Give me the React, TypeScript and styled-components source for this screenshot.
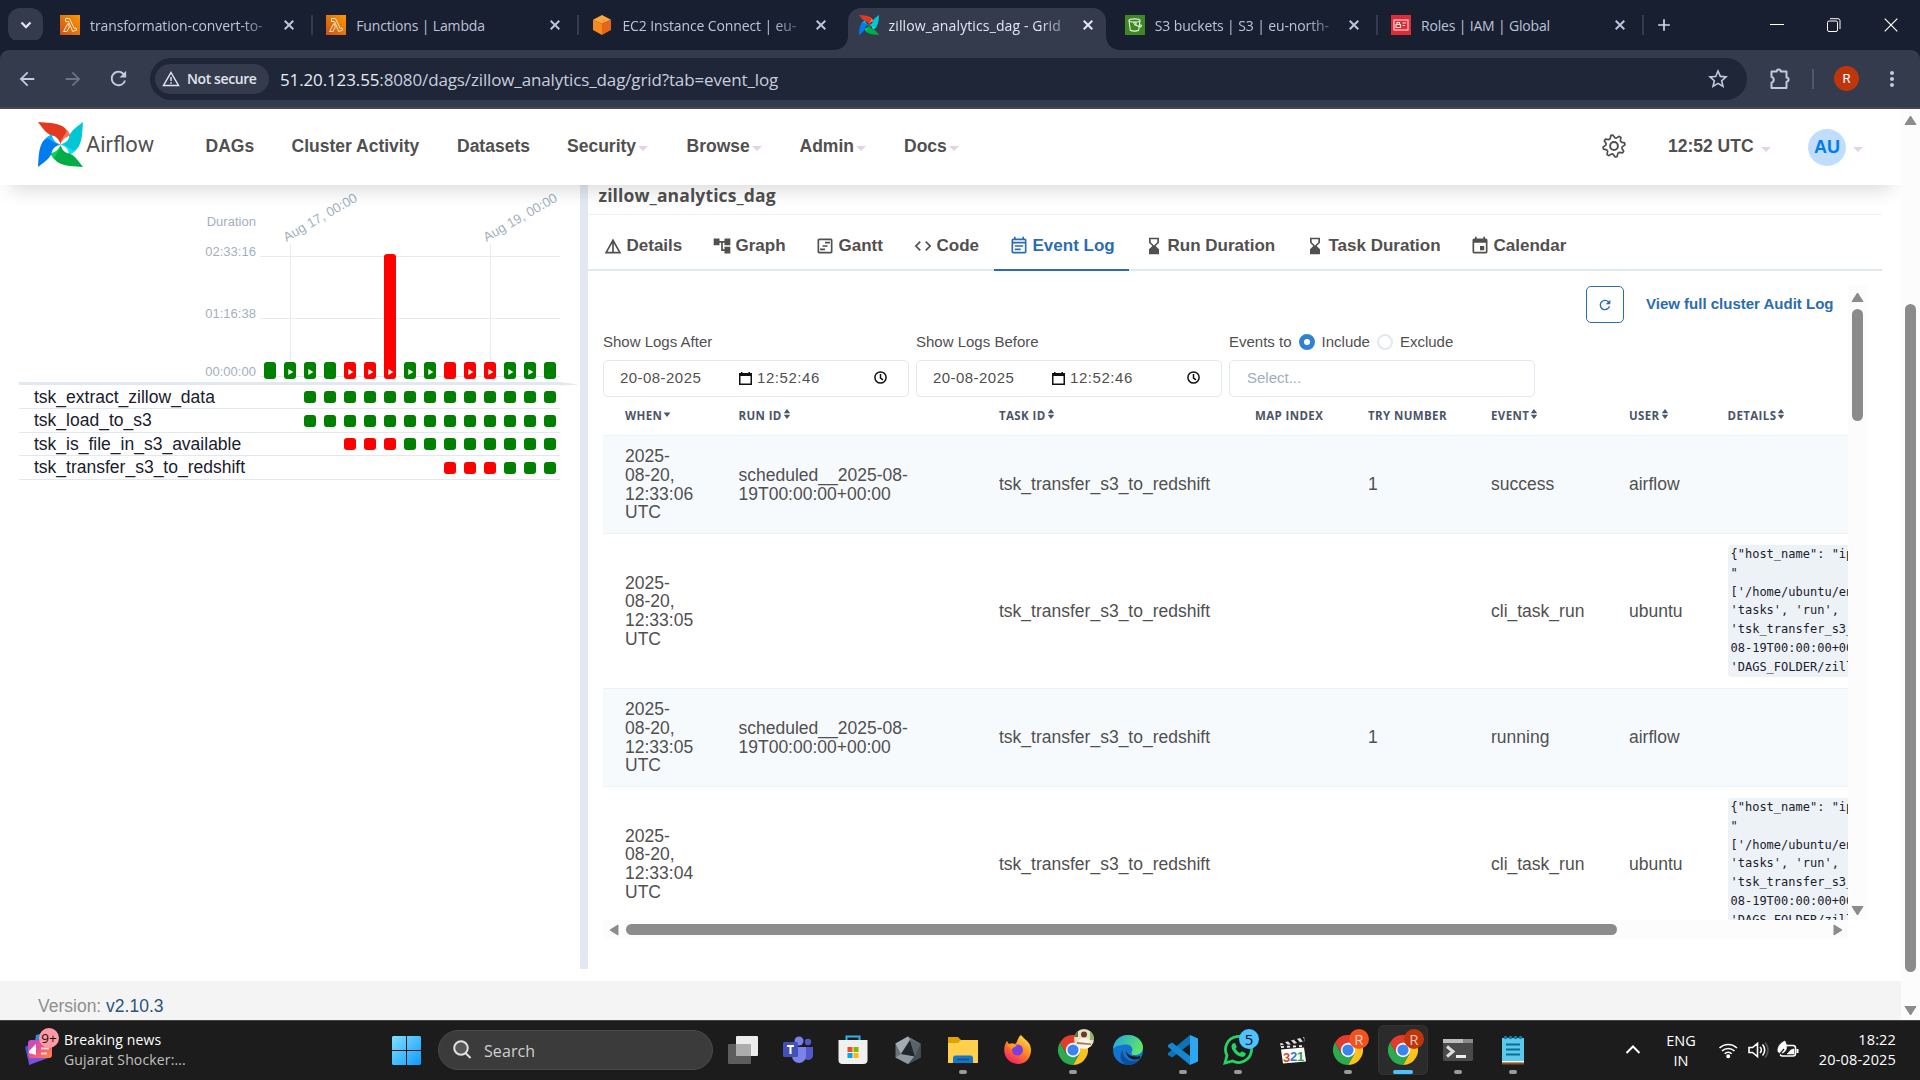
import React from 'react';
import styled, { createGlobalStyle, css } from 'styled-components';
import {
  MdDetails, MdAccountTree, MdOutlineViewTimeline, MdCode, MdOutlineEventNote, MdHourglassBottom, MdEvent,
  MdRefresh, MdArrowBack, MdArrowForward, MdStarBorder, MdMoreVert, MdAdd,
} from 'react-icons/md';

const ui = `'Open Sans', 'Noto Sans', sans-serif`;
const arial = `'Liberation Sans', Arial, sans-serif`;

const Global = createGlobalStyle`
  *, *::before, *::after { box-sizing: border-box; }
  html, body { margin: 0; padding: 0; overflow: hidden; }
  body { font-family: ${arial}; color: #51504f; background: #fff; }
  svg { display: block; flex: none; }
`;

const Screen = styled.div`
  width: 1920px; height: 1080px; display: flex; flex-direction: column; overflow: hidden; background: #fff;
`;

/* ---------- browser chrome ---------- */
const TabStrip = styled.div`
  height: 50px; flex: none; background: #181f30; display: flex; padding-left: 8px; font-family: ${ui};
`;
const TabSearch = styled.div`
  width: 35px; height: 34px; margin: 8px 6px 0 0; border-radius: 12px; background: #343b4c; color: #dfe3f0;
  display: flex; align-items: center; justify-content: center;
`;
const BrowserTab = styled.div<{ $active?: boolean }>`
  position: relative; width: 266.2px; height: 50px; display: flex; align-items: center; padding-left: 11px; flex: none;
  color: ${p => (p.$active ? '#e3e6f1' : '#bcc3dc')}; font-size: 14px;
  ${p => p.$active && css`
    z-index: 1;
    &::before {
      content: ''; position: absolute; left: 0; top: 8px; width: 258px; height: 42px; background: #343b4c;
      border-radius: 13px 13px 0 0; z-index: -1;
    }
    &::after {
      content: ''; position: absolute; left: -13px; bottom: 0; width: 284px; height: 13px; z-index: -1;
      background: radial-gradient(circle at 0 0, transparent 12.5px, #343b4c 13px) left / 13px 13px no-repeat,
        radial-gradient(circle at 100% 0, transparent 12.5px, #343b4c 13px) right / 13px 13px no-repeat;
    }
  `}
`;
const TabTitle = styled.span<{ $fade?: boolean; $ls: number }>`
  margin-left: 10px; width: 180px; white-space: nowrap; line-height: 22px; padding-top: 1px; flex: none; letter-spacing: ${p => p.$ls}px;
  ${p => p.$fade && css`mask-image: linear-gradient(90deg, #000 84%, rgba(0, 0, 0, 0.25) 100%);`}
`;
const TabClose = styled.span`
  width: 20px; margin-left: 9px; display: flex; justify-content: center; flex: none;
`;
const TabDivider = styled.i<{ $hidden?: boolean }>`
  width: 2px; height: 20px; margin-left: 12px; background: #343b4c; visibility: ${p => (p.$hidden ? 'hidden' : 'visible')};
`;
const NewTab = styled.div`
  width: 32px; margin-left: 2px; display: flex; align-items: center; justify-content: center; color: #d3d8ea;
`;
const WindowButtons = styled.div`
  margin-left: auto; display: flex; width: 172px; align-items: center; svg { margin: 0 auto; } > span { width: 57px; }
`;
const Toolbar = styled.div`
  height: 59px; flex: none; background: #343b4c; border-bottom: 2px solid #4a4450; display: flex; align-items: center;
  border-radius: 9px 9px 0 0; color: #c3c9df; font-family: ${ui}; padding-left: 4px; box-shadow: 0 -10px 0 #181f30;
  > * { flex: none; }
`;
const ToolButton = styled.span<{ $w: number; $dim?: boolean }>`
  width: ${p => p.$w}px; display: flex; justify-content: center; color: ${p => (p.$dim ? '#6b7283' : '#c3c9df')};
`;
const Omnibox = styled.div`
  width: 1597px; height: 42px; margin-left: 9px; border-radius: 21px; background: #1e2637; display: flex; align-items: center;
  padding: 0 17px 0 5px;
`;
const SecureChip = styled.div`
  width: 114px; height: 30px; border-radius: 15px; background: #343b4c; color: #e0e4ef; display: flex; align-items: center;
  padding-left: 7px; gap: 7px; font-size: 14px; font-weight: 600; letter-spacing: -0.4px; white-space: nowrap;
`;
const Url = styled.span`
  margin-left: 11px; font-size: 17px; letter-spacing: -0.13px; color: #c9cede; flex: 1; white-space: nowrap; padding-top: 1px;
  b { font-weight: 400; color: #e8ebf5; }
`;
const VLine = styled.i`width: 2px; height: 20px; background: #4f576c;`;
const Profile = styled.span`
  width: 25px; height: 25px; border-radius: 50%; background: #bf360c; color: #fff; font: 13px Roboto, sans-serif;
  display: flex; align-items: center; justify-content: center; margin: 0 21px 0 20px;
`;

/* ---------- page ---------- */
const Viewport = styled.div`height: 911px; flex: none; display: flex; overflow: hidden;`;
const Page = styled.div`width: 1901px; display: flex; flex-direction: column; overflow: hidden;`;
const NavBar = styled.nav`
  position: relative; z-index: 3; height: 76px; flex: none; background: #fff; display: flex; align-items: center;
  box-shadow: 0 14px 20px -10px rgba(0, 0, 0, 0.16); padding-left: 38px; font-size: 17.5px; font-weight: 700; line-height: 20px;
`;
const Brand = styled.div`
  width: 167.5px; display: flex; align-items: center; gap: 3px; padding-bottom: 5px;
  font: 400 21.8px Roboto, sans-serif; color: #51504f;
`;
const NavItem = styled.a<{ $w: number }>`
  width: ${p => p.$w}px; display: flex; align-items: center; white-space: nowrap; padding-bottom: 2px;
`;
const Caret = styled.i<{ $gap?: number }>`
  margin: 4px 0 0 ${p => p.$gap ?? 2}px; border: 5px solid transparent; border-top-color: #e3d3e6; border-bottom: 0;
`;
const NavRight = styled.div`margin-left: auto; width: 299.5px; display: flex; align-items: center; > svg { margin-top: -2px; }`;
const Clock = styled.span`margin-left: 42.5px; width: 97px; white-space: nowrap; padding-bottom: 2px;`;
const UserBadge = styled.span`
  width: 38px; height: 37px; border-radius: 50%; background: #c0defc; color: #017cee; display: flex; align-items: center;
  justify-content: center; margin: 1px 0 0 37px; padding-bottom: 1px; font-size: 18px;
`;
const Main = styled.main`height: 784px; flex: none; display: flex;`;
const Footer = styled.footer`
  height: 39px; margin-top: 12px; flex: none; background: #f4f4f4; padding: 15px 0 0 38px; font-size: 17.5px; line-height: 20px;
  color: #8f8f8f; a { color: #2b5379; }
`;

/* grid side */
const GridPane = styled.section`width: 580px; padding: 0 0 0 19px;`;
const ChartRow = styled.div`height: 197px; display: flex; padding-left: 180px;`;
const DurationAxis = styled.div`
  width: 57px; padding-top: 29px; display: flex; flex-direction: column; align-items: flex-end;
  font-size: 13px; line-height: 16px; color: #a3afc0; letter-spacing: 0.02px;
`;
const AxisLabel = styled.span<{ $gap: number }>`margin-top: ${p => p.$gap}px;`;
const ChartArea = styled.div`width: 320px; margin-left: 4px;`;
const HeadRule = styled.div`height: 3px; width: 541px; background: #e2e8f0;`;
const TaskRow = styled.div<{ $h: number }>`
  height: ${p => p.$h}px; width: 541px; border-bottom: 1px solid #e2e8f0; display: flex; align-items: center;
  padding: 0 4px 0 15px; color: #1a202c; font-size: 17.5px; line-height: 20px;
`;
const TaskName = styled.span<{ $pad: number }>`flex: 1; padding-bottom: ${p => p.$pad}px;`;
const Instances = styled.div<{ $pad: number }>`display: flex; gap: 8px; padding-top: ${p => p.$pad}px;`;
const Instance = styled.i<{ $ok: boolean }>`
  width: 12px; height: 12px; border-radius: 3px; background: ${p => (p.$ok ? '#008000' : '#ff0000')};
`;
const Splitter = styled.div`width: 8px; background: #e2e8f0; flex: none;`;

/* detail side */
const Detail = styled.section`width: 1294px; display: flex; flex-direction: column;`;
const DagTitle = styled.h1`
  height: 30px; margin: 0; padding: 0 0 0 10.5px; border-bottom: 1px solid #edf2f7; font: 700 17.5px/21px ${ui};
  letter-spacing: 0.12px; color: #51504f; flex: none;
`;
const Tabs = styled.div`
  height: 56px; flex: none; display: flex; border-bottom: 2px solid #e2e8f0; font-size: 17px; font-weight: 700; line-height: 20px;
`;
const Tab = styled.div<{ $w: number; $active?: boolean }>`
  width: ${p => p.$w}px; display: flex; align-items: center; gap: 3.5px; padding: 8px 0 0 15px; white-space: nowrap;
  margin-bottom: -2px; padding-bottom: ${p => (p.$active ? 0 : 2)}px;
  ${p => p.$active && css`color: #2b6cb0; border-bottom: 2px solid #2b6cb0;`}
`;
const LogBody = styled.div`height: 653px; margin: 15px 0 0 15px; width: 1264px; display: grid; grid-template: 634px 19px / 1245px 19px;`;
const LogContent = styled.div`overflow: hidden; width: 1245px; height: 634px;`;
const Actions = styled.div`display: flex; align-items: center; justify-content: flex-end; height: 37px; padding-right: 14px;`;
const RefreshButton = styled.button`
  width: 38px; height: 37px; border: 1px solid #2b6cb0; border-radius: 5px; background: #fff; color: #2b6cb0; padding: 0;
  display: flex; align-items: center; justify-content: center; margin-right: 22px;
`;
const AuditLink = styled.a`color: #2b6cb0; font-size: 15px; font-weight: 700; width: 187px; margin-right: 1px; white-space: nowrap; padding-bottom: 2px;`;
const Filters = styled.div`display: flex; gap: 7.5px; height: 73px; padding-top: 8px;`;
const Field = styled.div`width: 305.5px; font-size: 15px;`;
const FieldLabel = styled.div`height: 29px; display: flex; align-items: center; padding-bottom: 8px;`;
const InputBox = styled.div`
  height: 37px; border: 1px solid #e2e8f0; border-radius: 5px; display: flex; align-items: center; padding: 0 0 2px 16px;
`;
const DateText = styled.span`width: 119px; letter-spacing: 0.45px;`;
const TimeText = styled.span`width: 117px; margin-left: 5px; letter-spacing: 0.55px;`;
const Placeholder = styled.span`color: #a0aec0; padding-left: 1px;`;
const Radio = styled.i<{ $on?: boolean }>`
  width: 16px; height: 16px; border-radius: 50%; margin: 0 7px 0 7px; background: #fff;
  border: ${p => (p.$on ? '5px solid #3182ce' : '2px solid #e2e8f0')};
`;
const Table = styled.table`
  width: 1640px; table-layout: fixed; border-collapse: separate; border-spacing: 0; font-size: 17.5px; line-height: 18.7px;
`;
const Col = styled.col<{ $w: number }>`width: ${p => p.$w}px;`;
const Th = styled.th`
  height: 40px; padding: 12px 0 0 22px; text-align: left; border-bottom: 1px solid #edf2f7; color: #4a5568;
  font: 700 11.5px/16px ${ui}; letter-spacing: 0.38px; white-space: nowrap; vertical-align: top;
`;
const ThInner = styled.span`display: flex; align-items: center; gap: 1px; svg { margin-top: -4px; }`;
const Tr = styled.tr<{ $h: number; $odd: boolean }>`
  height: ${p => p.$h}px; background: ${p => (p.$odd ? '#f6fafd' : '#fff')};
`;
const Td = styled.td`padding: 0 0 0 22px; border-bottom: 1px solid #edf2f7; white-space: pre-line; vertical-align: middle;`;
const Code = styled.code`
  display: block; width: 420px; height: 132px; background: #edf2f7; color: #1a202c; padding: 0 3px; border-radius: 3px;
  font: 12px/18.8px 'DejaVu Sans Mono', monospace; white-space: pre;
`;

/* scrollbars */
const VScroll = styled.div<{ $h: number; $pad?: string }>`
  width: 19px; height: ${p => p.$h}px; background: #fcfcfc; display: flex; flex-direction: column; align-items: center;
  padding: ${p => p.$pad ?? '7px 0'};
`;
const HScroll = styled.div`
  width: 1245px; background: #fcfcfc; display: flex; align-items: center; padding: 0 5px 0 6px;
`;
const VThumb = styled.i<{ $top: number; $h: number }>`
  width: 11px; height: ${p => p.$h}px; margin-top: ${p => p.$top}px; border-radius: 6px; background: #8b8b8b;
`;
const HThumb = styled.i`width: 991px; height: 11px; border-radius: 6px; background: #8b8b8b; margin-left: 7px;`;
const Push = styled.i`flex: 1;`;

/* ---------- taskbar ---------- */
const Taskbar = styled.div`
  height: 60px; flex: none; background: #1c1c1c; border-top: 1px solid #444; display: flex; font-family: ${ui}; color: #fff;
`;
const News = styled.div`width: 392px; display: flex; padding: 6px 0 0 24px; gap: 3px; font-size: 14px; line-height: 20px; white-space: nowrap;`;
const NewsText = styled.div`
  padding-top: 3px; letter-spacing: 0.18px; display: flex; flex-direction: column; span + span { color: #c0c0c0; letter-spacing: 0.14px; }
`;
const StartButton = styled.div`width: 46px; padding-top: 15px;`;
const SearchBox = styled.div`
  width: 275px; height: 40px; margin-top: 9px; border-radius: 20px; background: #3b3b3b; border: 1px solid #4a4a4a;
  display: flex; align-items: center; gap: 12px; padding-left: 14px; font-size: 16px; color: #d0d0d0;
`;
const SearchText = styled.span`padding-top: 1px; letter-spacing: 0.1px;`;
const Apps = styled.div`display: flex; padding: 4px 0 0 5px;`;
const AppSlot = styled.div<{ $active?: boolean }>`
  position: relative; width: 50px; height: 50px; margin-right: 5px; border-radius: 6px; display: flex; align-items: center;
  justify-content: center; ${p => p.$active && css`background: #2b2b2b; box-shadow: inset 0 0 0 1px #333;`}
`;
const Running = styled.i<{ $active?: boolean }>`
  position: absolute; bottom: 1px; height: 4px; width: ${p => (p.$active ? 20 : 8)}px; border-radius: 2px;
  background: ${p => (p.$active ? '#4cc2ff' : '#9a9a9a')};
`;
const Badge = styled.span<{ $bg: string; $fg: string }>`
  position: absolute; top: 4px; right: 4px; width: 20px; height: 20px; border-radius: 50%; background: ${p => p.$bg};
  color: ${p => p.$fg}; font-size: 15px; line-height: 20px; text-align: center; font-family: ${ui};
`;
const Tray = styled.div`
  margin-left: auto; width: 297px; display: flex; align-items: center; font-size: 14.5px; line-height: 20px; padding-bottom: 1px;
`;
const Lang = styled.div`width: 60px; margin-left: 8px; padding-top: 2px; text-align: center;`;
const DateTime = styled.div`margin-left: auto; padding-right: 24px; text-align: right; white-space: nowrap; letter-spacing: 0.15px;`;

/* ---------- drawings ---------- */
const Pinwheel = ({ w, h }: { w: number; h: number }) => (
  <svg width={w} height={h} viewBox="0 0 45 45" preserveAspectRatio="none">
    {[['#e43921', '#ff7557'], ['#00c7d4', '#11e1ee'], ['#00ad46', '#04d659'], ['#017cee', '#0cb6ff']].map(([a, b], i) => (
      <g key={a} transform={`rotate(${i * 90} 22.5 22.5)`}>
        <path fill={b} d="M25 5C29 7 31.500 10 32.500 14C27 14.500 24 18 22.500 22.500Z" />
        <path fill={a} d="M0 0C9 .7 18 .5 25 4.500C27 6 28 8 28.500 10C26 14 23 17 22.500 22.500C21 17 18 14 13.500 13.500C8 11.500 4 5 0 0Z" />
      </g>
    ))}
  </svg>
);
const X = ({ s = 10, w = 2 }: { s?: number; w?: number }) => (
  <svg width={s} height={s} viewBox="0 0 10 10" stroke="currentColor" strokeWidth={w} fill="none"><path d="M.7.7l8.600 8.600M9.300.7L.7 9.300" /></svg>
);
const Puzzle = () => (
  <svg width="22" height="22" viewBox="0 0 22 22" fill="none" stroke="currentColor" strokeWidth="2" strokeLinejoin="round">
    <path d="M2.500 3.500h5.200a2 2 0 0 1 4 0h5.800v6a2 2 0 0 1 0 4.200v6.300h-15v-5.300a3 3 0 0 0 0-5.800z" />
  </svg>
);
const LambdaIcon = () => (
  <svg width="20" height="20" viewBox="0 0 20 20">
    <defs><linearGradient id="lam" x1="0" y1="1" x2="1" y2="0"><stop stopColor="#c8511b" /><stop offset="1" stopColor="#f90" /></linearGradient></defs>
    <rect width="20" height="20" fill="url(#lam)" />
    <path d="M5.500 3.500h4l4.700 10 1.800-.7.700 2.200-4 1.500L8.500 6.500h-3zM7.800 8.500l1.600 3.200L7 16.500H3.600z" fill="none" stroke="#ffe6c4" strokeWidth="1" />
  </svg>
);
const Ec2Icon = () => (
  <svg width="20" height="20" viewBox="0 0 20 20"><path fill="#ffa43d" d="M10 0l9 4.700-9 4.300-9-4.300z" /><path fill="#f68a1f" d="M1 4.700L10 9v11l-9-5z" /><path fill="#e5661a" d="M19 4.700L10 9v11l9-5z" /></svg>
);
const S3Icon = () => (
  <svg width="20" height="20" viewBox="0 0 20 20"><rect width="20" height="20" fill="#3f8624" /><g fill="none" stroke="#e3f3dc" strokeWidth="1.100"><ellipse cx="9.500" cy="5.500" rx="5.500" ry="1.600" /><path d="M4 5.500l1.300 9.700c1.800 1.200 6.700 1.200 8.400 0L15 5.500" /><path d="M9 9.500l6.500 2.500 1-1.500-2-1M8 8h3v3" /></g></svg>
);
const IamIcon = () => (
  <svg width="20" height="20" viewBox="0 0 20 20"><rect width="20" height="20" fill="#dd2c38" /><g fill="none" stroke="#ffe1e3" strokeWidth="1.100"><rect x="3" y="5" width="14" height="10" /><path d="M5 12.500h4.500v-3H5zM6 9.500V7.500h2.500v2M11.500 8H15M11.500 10.500H14" /></g></svg>
);
const Gear = () => {
  const pts = Array.from({ length: 32 }, (_, i) => {
    const r = [11, 11, 8.2, 8.2][i % 4];
    const a = ((i * 11.25 - 16.9 + (i % 2 ? -1 : 1) * 0.5) * Math.PI) / 180;
    return `${(12 + r * Math.cos(a)).toFixed(2)},${(12 + r * Math.sin(a)).toFixed(2)}`;
  }).join(' ');
  return (
    <svg width="24" height="24" viewBox="0 0 24 24" fill="none" stroke="#51504f" strokeWidth="1.700" strokeLinejoin="round"><polygon points={pts} /><circle cx="12" cy="12" r="3.900" strokeWidth="2" /></svg>
  );
};
const Arrow = ({ dir }: { dir: 'up' | 'down' | 'left' | 'right' }) => {
  const d = { up: 'M6.500 1L12 9.500H1z', down: 'M6.500 9L12 .5H1z', left: 'M1 6l8-5v10z', right: 'M9 6L1 1v10z' }[dir];
  const side = dir === 'left' || dir === 'right';
  return (
    <svg width={side ? 10 : 13} height={side ? 12 : 10} viewBox={side ? '0 0 10 12' : '0 0 13 10'}><path d={d} fill="#8b8b8b" stroke="#8b8b8b" strokeLinejoin="round" /></svg>
  );
};
const Sort = ({ both }: { both?: boolean }) => (
  <svg width="8" height="10" viewBox="0 0 8 10" fill="#4a5568">{both ? <path d="M4 0l3.200 4.300H.8zM4 10L.8 5.700h6.400z" /> : <path d="M4 8L.6 3.500h6.800z" />}</svg>
);
const CalendarGlyph = () => (
  <svg width="13" height="14" viewBox="0 0 13 14"><path fill="#111" d="M2 1h1.500v1h6V1H11v1h2v12H0V2h2zM1.500 5v7.500h10V5z" /></svg>
);
const ClockGlyph = () => (
  <svg width="13" height="13" viewBox="0 0 13 13" fill="none" stroke="#111" strokeWidth="1.500"><circle cx="6.500" cy="6.500" r="5.600" /><path d="M6.500 3v4l2.500 1.800" /></svg>
);

const runs: [boolean, boolean][] = [
  [true, false], [true, true], [true, true], [true, false], [false, true], [false, true], [false, true], [true, true],
  [true, true], [false, false], [false, true], [false, true], [true, true], [true, true], [true, false],
];
const DurationChart = () => (
  <svg width="320" height="203" viewBox="260 185 320 203" style={{ overflow: 'visible' }}>
    <g stroke="#e6eaf3" strokeWidth="1"><path d="M260 256.500H560M260 318.500H560M260 376.500H560M290.500 244V376M490.500 244V376" /></g>
    <path d="M560 382l19 2.500-19 1z" fill="#e2e8f0" />
    {runs.map(([ok, manual], i) => (
      <g key={i}>
        <rect x={264 + i * 20} y={i === 6 ? 254 : 362} width="12" height={i === 6 ? 125 : 17} rx="3" fill={ok ? '#008000' : '#ff0000'} />
        {manual && <path d={`M${268.3 + i * 20} 369l5 3-5 3z`} fill="#fff" />}
      </g>
    ))}
    <g fill="#a3afc0" fontSize="13.300" fontFamily="Liberation Sans, Arial, sans-serif">
      <text transform="translate(286.500 242) rotate(-30)">Aug 17, 00:00</text>
      <text transform="translate(486.500 242) rotate(-30)">Aug 19, 00:00</text>
    </g>
  </svg>
);

const Chrome = () => (
  <svg width="30" height="30" viewBox="0 0 30 30">
    <path fill="#e33b2e" d="M2 7.500A15 15 0 0 1 28 7.500L15 8 8.500 18.700z" /><path fill="#fcc31e" d="M28 7.500A15 15 0 0 1 15 30l6.500-11.500L15 7.500z" />
    <path fill="#2da94f" d="M2 7.500A15 15 0 0 0 15 30l6.500-11.200-13 .2z" /><circle cx="15" cy="15" r="7.200" fill="#fff" /><circle cx="15" cy="15" r="5.600" fill="#3c82f0" />
  </svg>
);
const TaskView = () => (
  <svg width="30" height="30" viewBox="0 0 30 30"><rect y="9" width="23" height="20" rx="1" fill="#5d5d5d" /><rect x="8" y="1" width="22" height="20" rx="1" fill="#ececec" /><path d="M8 9h15v12H8z" fill="#adadad" /></svg>
);
const Teams = () => (
  <svg width="30" height="30" viewBox="0 0 30 30"><circle cx="25" cy="7" r="3.200" fill="#5059c9" /><path fill="#5059c9" d="M20 12h10v8a5 5 0 0 1-9 3z" /><circle cx="16" cy="6" r="4.500" fill="#7b83eb" /><path fill="#7b83eb" d="M9 12h14v9a7 7 0 0 1-14 0z" /><rect y="7" width="15" height="15" rx="1.500" fill="#4350b8" /><path d="M4 11h7M7.500 11v8" stroke="#fff" strokeWidth="2" /></svg>
);
const Store = () => (
  <svg width="30" height="30" viewBox="0 0 30 30"><path d="M8.500 7V1.500h13V7" fill="none" stroke="#29b6e8" strokeWidth="2" /><path fill="#f0f0f0" d="M.5 5h29v20a4 4 0 0 1-4 4h-21a4 4 0 0 1-4-4z" /><path fill="#f25022" d="M9.500 12h5v5h-5z" /><path fill="#7fba00" d="M15.500 12h5v5h-5z" /><path fill="#00a4ef" d="M9.500 18h5v5h-5z" /><path fill="#ffb900" d="M15.500 18h5v5h-5z" /></svg>
);
const Cube = () => (
  <svg width="30" height="30" viewBox="0 0 30 30">
    <path fill="#6a737a" d="M15 1.500l12.500 7v14L15 29 2.500 22.500v-14z" /><path fill="#a3acb3" d="M15 1.500L2.500 8.500 8 19 17 5z" /><path fill="#454d54" d="M27.500 8.500v14L15 29l6.500-8z" />
    <path fill="#90999f" d="M2.500 22.500L8 19l13.500 2L15 29z" /><path fill="#20262b" d="M17 5l5 16.500L8 19z" /><path fill="#59626a" d="M17 5l10.500 3.500-5.500 13z" />
  </svg>
);
const Folder = () => (
  <svg width="30" height="30" viewBox="0 0 30 30"><path fill="#e2a101" d="M0 2h10l3 3h16v8H0z" /><path fill="#ffd04b" d="M0 8h10l3-3h17v23H0z" /><path fill="#1577c9" d="M5 28v-5a2.500 2.500 0 0 1 2.500-2.500h15A2.500 2.500 0 0 1 25 23v5z" /><path d="M9 24.500h12" stroke="#0b4f8f" strokeWidth="1.500" /></svg>
);
const Firefox = () => (
  <svg width="30" height="30" viewBox="0 0 30 30">
    <defs><linearGradient id="ff" x1=".8" y1="0" x2=".2" y2="1"><stop stopColor="#ffe14d" /><stop offset=".45" stopColor="#ff8a1f" /><stop offset="1" stopColor="#f5156c" /></linearGradient></defs>
    <path fill="url(#ff)" d="M18 0c2 3 6 5 8.500 9C31 18 25 29 15 29 5 29-1 20 2 10c.5-2 1.300-3 2-4l2 3c2-1 4-1 6 0 3-2 2-6 6-9z" /><circle cx="14.500" cy="15" r="5.500" fill="#7a3fe0" /><path fill="#ff9c22" d="M5 10c3-2 7-1 9 1-2 1-4 1-5 3-2 0-3-2-4-4z" />
  </svg>
);
const Edge = () => (
  <svg width="30" height="30" viewBox="0 0 30 30">
    <defs><linearGradient id="eg" x1="0" y1="0" x2="1" y2=".4"><stop stopColor="#1fa2e6" /><stop offset="1" stopColor="#5fe36a" /></linearGradient></defs>
    <circle cx="15" cy="15" r="15" fill="#1374cf" /><path fill="url(#eg)" d="M0 14C1 5 7 0 15 0c9 0 15 6 15 12.500 0 5-4 7.500-8 7.500s-4-2-3-3.500c1.500-3-1-7-5-7C8 9.500 2 11 0 14z" /><path fill="#0e4f9e" d="M10 15c-1 6 4 11 10 11 3 0 5-.8 7-2-3 4-7 6-12 6C8 30 5 20 10 15z" /><path fill="#1c1c1c" d="M13.500 13c-2 6 5 10 14 8l-.8 2.500C20 27 11 22 13.500 13z" />
  </svg>
);
const VSCode = () => (
  <svg width="30" height="30" viewBox="0 0 30 30"><path fill="#0c73b8" d="M22 0v9L4 22.500 0 20V18z" /><path fill="#1786cf" d="M0 10l4-2.500L22 21v9L0 12z" /><path fill="#2da7f0" d="M22 0l8 3.500v23L22 30z" /></svg>
);
const WhatsApp = () => (
  <svg width="30" height="30" viewBox="0 0 30 30"><path d="M2 28l2-7.500A13 13 0 1 1 9.500 26z" fill="none" stroke="#25d366" strokeWidth="2.800" /><path fill="#25d366" d="M10 8.500l2-.5 1.800 4-1.300 1.800c1 2 2.500 3.300 4.500 4.200l1.800-1.800 4 2c0 3-2.500 4-4.500 3.600C13 20.500 8.500 15 8.500 11.500c0-1.300.7-2.300 1.500-3z" /></svg>
);
const Clapper = () => (
  <svg width="30" height="30" viewBox="0 0 30 30"><path fill="#ddd" d="M2 8.500L26 2l1 4L3 12z" /><path stroke="#151515" strokeWidth="2.500" d="M5 7l4 4M11 5.500l4 4M17 4l4 4M23 2l3 4" /><path fill="#222" d="M3 10l24-1v4H3z" /><path stroke="#eee" strokeWidth="2" strokeDasharray="3 3" d="M3 12l24-1" /><path fill="#fff" d="M3 14.500l23-2 2 14-23 2z" />
    <g fontFamily="Liberation Sans, sans-serif" fontWeight="700" fontSize="13"><text x="5" y="26.500" fill="#d64a1f">3</text><text x="12" y="26" fill="#2e7bd1">2</text><text x="19" y="25.500" fill="#3b9b3b">1</text></g></svg>
);
const Terminal = () => (
  <svg width="30" height="30" viewBox="0 0 30 30"><rect y="4" width="30" height="22" rx="1.500" fill="#4a4a4a" /><path fill="#bdbdbd" d="M0 4h20v4H0z" /><path fill="#8a8a8a" d="M20 4h10v4H20z" /><path d="M4 11.500l6 5-6 5" fill="none" stroke="#dcdcdc" strokeWidth="3" /><path fill="#eee" d="M13 20h10v3H13z" /></svg>
);
const Notepad = () => (
  <svg width="30" height="30" viewBox="0 0 30 30"><path fill="#5cc8ea" d="M4 3h22v25H4z" /><path fill="#fff" d="M4 26h22v1.500H4z" /><path fill="#a34d10" d="M4 27.500h22v2H4z" /><path d="M8 9.500h14M8 14.500h14M8 19.500h14" stroke="#0b6c96" strokeWidth="1.800" /><g fill="#0b7ba8"><circle cx="7.500" cy="2.500" r="1.800" /><circle cx="12.500" cy="2.500" r="1.800" /><circle cx="17.500" cy="2.500" r="1.800" /><circle cx="22.500" cy="2.500" r="1.800" /></g></svg>
);
const PhotoSvg = styled.svg`position: absolute; top: 4px; right: 4px;`;
const PhotoBadge = () => (
  <PhotoSvg width="20" height="20" viewBox="0 0 20 20"><clipPath id="ph"><circle cx="10" cy="10" r="10" /></clipPath><g clipPath="url(#ph)"><path fill="#e6e3c4" d="M0 0h20v20H0z" /><path fill="#5d7340" d="M0 0h4v8H0z" /><path fill="#8fb567" d="M16 2h4v9h-4z" /><circle cx="10" cy="5.500" r="3" fill="#6b3d25" /><path fill="#f7f3ec" d="M3 20c0-8 3-11 7-11s8 3 8 11z" /><path fill="#a5765a" d="M3 13l14 1.500v1.500L3 15z" /></g></PhotoSvg>
);
const NewsIcon = () => (
  <svg width="37" height="40" viewBox="0 0 37 40">
    <defs><linearGradient id="nw" x1="0" y1="0" x2="1" y2="1"><stop stopColor="#b04bd8" /><stop offset=".5" stopColor="#f0518c" /><stop offset="1" stopColor="#ff8a3d" /></linearGradient></defs>
    <path fill="#2a8be0" d="M12 8l8-2v8h-9z" /><path fill="#3e57c9" d="M1 20l5-3 2 14-4 2z" /><path fill="#7a52e0" d="M4 30l20 1-19 7z" /><rect x="4" y="13" width="24" height="18" rx="3" fill="url(#nw)" /><path fill="#fff" d="M5 24l7-7v11l-7-2z" /><path d="M17 21.500h8M17 26.500h6" stroke="#ffd9c0" strokeWidth="2" />
    <circle cx="25" cy="11" r="10" fill="#ff99a4" /><text x="25" y="16" textAnchor="middle" fontSize="13.500" fill="#111" fontFamily="Open Sans, sans-serif">9+</text>
  </svg>
);

/* ---------- data ---------- */
const browserTabs = [
  { icon: <LambdaIcon />, title: 'transformation-convert-to-', fade: true, ls: -0.1 },
  { icon: <LambdaIcon />, title: 'Functions | Lambda', ls: -0.14 },
  { icon: <Ec2Icon />, title: 'EC2 Instance Connect | eu-', fade: true, noDivider: true, ls: -0.12 },
  { icon: <Pinwheel w={20} h={20} />, title: 'zillow_analytics_dag - Grid', active: true, fade: true, noDivider: true, ls: 0.12 },
  { icon: <S3Icon />, title: 'S3 buckets | S3 | eu-north-', fade: true, ls: -0.12 },
  { icon: <IamIcon />, title: 'Roles | IAM | Global', ls: -0.17 },
];
const nav: [string, number, boolean][] = [
  ['DAGs', 86, false], ['Cluster Activity', 165.5, false], ['Datasets', 110, false], ['Security', 119.5, true],
  ['Browse', 113, true], ['Admin', 104.5, true], ['Docs', 80, true],
];
const tasks: { name: string; h: number; pad: number; states: string }[] = [
  { name: 'tsk_extract_zillow_data', h: 24, pad: 0, states: 'ggggggggggggg' },
  { name: 'tsk_load_to_s3', h: 24, pad: 2, states: 'ggggggggggggg' },
  { name: 'tsk_is_file_in_s3_available', h: 23, pad: 1, states: 'rrrgggggggg' },
  { name: 'tsk_transfer_s3_to_redshift', h: 24, pad: 2, states: 'rrrggg' },
];
const tabs: [string, React.ReactNode, number][] = [
  ['Details', <MdDetails size={20} />, 109], ['Graph', <MdAccountTree size={20} />, 103],
  ['Gantt', <MdOutlineViewTimeline size={20} />, 98], ['Code', <MdCode size={20} />, 96],
  ['Event Log', <MdOutlineEventNote size={20} />, 135], ['Run Duration', <MdHourglassBottom size={20} />, 161],
  ['Task Duration', <MdHourglassBottom size={20} />, 165], ['Calendar', <MdEvent size={20} />, 130],
];
const columns: [string, number, 'desc' | 'both' | null][] = [
  ['WHEN', 113.5, 'desc'], ['RUN ID', 260.5, 'both'], ['TASK ID', 256, 'both'], ['MAP INDEX', 113, null],
  ['TRY NUMBER', 123, null], ['EVENT', 138, 'both'], ['USER', 98.5, 'both'], ['DETAILS', 537.5, 'both'],
];
const extra = `{"host_name": "ip-172-31-39-30", "full_command":
"
['/home/ubuntu/endtoendenv/bin/airflow',
'tasks', 'run', 'zillow_analytics_dag',
'tsk_transfer_s3_to_redshift', 'scheduled__2025-
08-19T00:00:00+00:00', '--local', '--subdir',
'DAGS_FOLDER/zillow_analytics.py']`;
const logs = [
  { t: '12:33:06', run: true, event: 'success', user: 'airflow', h: 98 },
  { t: '12:33:05', run: false, event: 'cli_task_run', user: 'ubuntu', h: 155 },
  { t: '12:33:05', run: true, event: 'running', user: 'airflow', h: 98 },
  { t: '12:33:04', run: false, event: 'cli_task_run', user: 'ubuntu', h: 155 },
];
const apps: { icon: React.ReactNode; run?: boolean; active?: boolean; badge?: [string, string, string]; photo?: boolean }[] = [
  { icon: <TaskView /> }, { icon: <Teams /> }, { icon: <Store /> }, { icon: <Cube /> }, { icon: <Folder />, run: true },
  { icon: <Firefox /> }, { icon: <Chrome />, run: true, photo: true }, { icon: <Edge /> }, { icon: <VSCode />, run: true },
  { icon: <WhatsApp />, run: true, badge: ['5', '#4cc2ff', '#111'] }, { icon: <Clapper /> },
  { icon: <Chrome />, run: true, badge: ['R', '#f4511e', '#f8d3c8'] },
  { icon: <Chrome />, run: true, active: true, badge: ['R', '#bf360c', '#efc5b8'] },
  { icon: <Terminal />, run: true }, { icon: <Notepad />, run: true },
];

const DateField = ({ label }: { label: string }) => (
  <Field>
    <FieldLabel>{label}</FieldLabel>
    <InputBox><DateText>20-08-2025</DateText><CalendarGlyph /><TimeText>12:52:46</TimeText><ClockGlyph /></InputBox>
  </Field>
);

export default function App() {
  return (
    <Screen>
      <Global />
      <TabStrip>
        <TabSearch>
          <svg width="12" height="8" viewBox="0 0 12 8" fill="none" stroke="currentColor" strokeWidth="2.300"><path d="M1.500 1.500L6 6l4.500-4.500" /></svg>
        </TabSearch>
        {browserTabs.map(t => (
          <BrowserTab key={t.title} $active={t.active}>
            {t.icon}
            <TabTitle $fade={t.fade} $ls={t.ls}>{t.title}</TabTitle>
            <TabClose><X /></TabClose>
            <TabDivider $hidden={t.noDivider} />
          </BrowserTab>
        ))}
        <NewTab><MdAdd size={20} /></NewTab>
        <WindowButtons>
          <span><svg width="14" height="14" viewBox="0 0 14 14"><path d="M0 6.500h14" stroke="#fff" /></svg></span>
          <span><svg width="14" height="14" viewBox="0 0 14 14" fill="none" stroke="#fff"><rect x=".5" y="3" width="10" height="10.500" rx="1.500" /><path d="M3 .7h8a2 2 0 0 1 2 2V11" /></svg></span>
          <span><svg width="14" height="14" viewBox="0 0 14 14" fill="none" stroke="#fff" strokeWidth="1.200"><path d="M.7.7l12.600 12.600M13.300.7L.7 13.300" /></svg></span>
        </WindowButtons>
      </TabStrip>
      <Toolbar>
        <ToolButton $w={46}><MdArrowBack size={22} /></ToolButton>
        <ToolButton $w={45} $dim><MdArrowForward size={22} /></ToolButton>
        <ToolButton $w={46}><MdRefresh size={23} /></ToolButton>
        <Omnibox>
          <SecureChip>
            <svg width="18" height="16" viewBox="0 0 18 16" fill="none" stroke="currentColor" strokeWidth="1.500"><path d="M9 1.500L16.500 14.500h-15zM9 6v4M9 11.300v1.500" /></svg>
            Not secure
          </SecureChip>
          <Url><b>51.20.123.55</b>:8080/dags/zillow_analytics_dag/grid?tab=event_log</Url>
          <MdStarBorder size={24} />
        </Omnibox>
        <ToolButton $w={65}><Puzzle /></ToolButton>
        <VLine />
        <Profile>R</Profile>
        <MdMoreVert size={24} />
      </Toolbar>
      <Viewport>
        <Page>
          <NavBar>
            <Brand><Pinwheel w={45} h={45} />Airflow</Brand>
            {nav.map(([label, w, caret]) => (
              <NavItem key={label} $w={w}>{label}{caret && <Caret />}</NavItem>
            ))}
            <NavRight>
              <Gear />
              <Clock>12:52 UTC</Clock>
              <Caret $gap={-4} />
              <UserBadge>AU</UserBadge>
              <Caret $gap={7} />
            </NavRight>
          </NavBar>
          <Main>
            <GridPane>
              <ChartRow>
                <DurationAxis>
                  <AxisLabel $gap={0}>Duration</AxisLabel>
                  <AxisLabel $gap={14}>02:33:16</AxisLabel>
                  <AxisLabel $gap={46}>01:16:38</AxisLabel>
                  <AxisLabel $gap={42}>00:00:00</AxisLabel>
                </DurationAxis>
                <ChartArea><DurationChart /></ChartArea>
              </ChartRow>
              <HeadRule />
              {tasks.map(t => (
                <TaskRow key={t.name} $h={t.h}>
                  <TaskName $pad={t.pad}>{t.name}</TaskName>
                  <Instances $pad={t.h === 24 ? 1 : 0}>{t.states.split('').map((s, i) => <Instance key={i} $ok={s === 'g'} />)}</Instances>
                </TaskRow>
              ))}
            </GridPane>
            <Splitter />
            <Detail>
              <DagTitle>zillow_analytics_dag</DagTitle>
              <Tabs>
                {tabs.map(([label, icon, w]) => (
                  <Tab key={label} $w={w} $active={label === 'Event Log'}>{icon}{label}</Tab>
                ))}
              </Tabs>
              <LogBody>
                <LogContent>
                  <Actions>
                    <RefreshButton><MdRefresh size={16} /></RefreshButton>
                    <AuditLink>View full cluster Audit Log</AuditLink>
                  </Actions>
                  <Filters>
                    <DateField label="Show Logs After" />
                    <DateField label="Show Logs Before" />
                    <Field>
                      <FieldLabel>Events to<Radio $on />Include<Radio />Exclude</FieldLabel>
                      <InputBox><Placeholder>Select...</Placeholder></InputBox>
                    </Field>
                  </Filters>
                  <Table>
                    <colgroup>{columns.map(([c, w]) => <Col key={c} $w={w} />)}</colgroup>
                    <thead>
                      <tr>{columns.map(([c, , s]) => <Th key={c}><ThInner>{c}{s && <Sort both={s === 'both'} />}</ThInner></Th>)}</tr>
                    </thead>
                    <tbody>
                      {logs.map((l, i) => (
                        <Tr key={i} $h={l.h} $odd={i % 2 === 0}>
                          <Td>{`2025-\n08-20,\n${l.t}\nUTC`}</Td>
                          <Td>{l.run && 'scheduled__2025-08-\n19T00:00:00+00:00'}</Td>
                          <Td>tsk_transfer_s3_to_redshift</Td>
                          <Td />
                          <Td>{l.run && '1'}</Td>
                          <Td>{l.event}</Td>
                          <Td>{l.user}</Td>
                          <Td>{!l.run && <Code>{extra}</Code>}</Td>
                        </Tr>
                      ))}
                    </tbody>
                  </Table>
                </LogContent>
                <VScroll $h={634} $pad="6px 0 4px"><Arrow dir="up" /><VThumb $top={7} $h={112} /><Push /><Arrow dir="down" /></VScroll>
                <HScroll><Arrow dir="left" /><HThumb /><Push /><Arrow dir="right" /></HScroll>
              </LogBody>
            </Detail>
          </Main>
          <Footer>Version: <a>v2.10.3</a></Footer>
        </Page>
        <VScroll $h={911} $pad="6px 0 4px"><Arrow dir="up" /><VThumb $top={179} $h={668} /><Push /><Arrow dir="down" /></VScroll>
      </Viewport>
      <Taskbar>
        <News><NewsIcon /><NewsText><span>Breaking news</span><span>Gujarat Shocker:...</span></NewsText></News>
        <StartButton>
          <svg width="29" height="29" viewBox="0 0 29 29">
            <defs><linearGradient id="win" x1="0" y1="0" x2="1" y2="1" gradientUnits="objectBoundingBox"><stop stopColor="#7fe0ff" /><stop offset="1" stopColor="#0f9bff" /></linearGradient></defs>
            <path fill="url(#win)" d="M1 0h13v14H0V1zM15 0h13l1 1v13H15zM0 15h14v14H1l-1-1zM15 15h14v13l-1 1H15z" />
          </svg>
        </StartButton>
        <SearchBox>
          <svg width="19" height="20" viewBox="0 0 19 20" fill="#575757" stroke="#e2e2e2" strokeWidth="2"><circle cx="8" cy="8" r="6.800" /><path d="M12.500 13l5 5" /></svg>
          <SearchText>Search</SearchText>
        </SearchBox>
        <Apps>
          {apps.map((a, i) => (
            <AppSlot key={i} $active={a.active}>
              {a.icon}
              {a.photo && <PhotoBadge />}
              {a.badge && <Badge $bg={a.badge[1]} $fg={a.badge[2]}>{a.badge[0]}</Badge>}
              {a.run && <Running $active={a.active} />}
            </AppSlot>
          ))}
        </Apps>
        <Tray>
          <svg width="20" height="20" viewBox="0 0 20 20" fill="none" stroke="#fff" strokeWidth="2"><path d="M3.500 13L10 6.500l6.500 6.500" /></svg>
          <Lang>ENG<br />IN</Lang>
          <svg style={{ marginLeft: 7 }} width="84" height="22" viewBox="0 0 84 22" fill="none" stroke="#fff" strokeWidth="1.600">
            <path d="M1.500 9a12.500 12.500 0 0 1 17.500 0M4 12a9 9 0 0 1 12.500 0M6.700 14.800a5 5 0 0 1 7 0" /><circle cx="10.200" cy="17.200" r="1.200" fill="#fff" />
            <path d="M31 8.500h3.500l5-4v13l-5-4H31zM42 8a4 4 0 0 1 0 6M44.500 5.500a8 8 0 0 1 0 11" /><path d="M47 3.500a11 11 0 0 1 0 15" stroke="#555" />
            <rect x="62" y="6.500" width="15.500" height="10.500" rx="2.500" /><path d="M79.500 10v4" strokeWidth="2" /><path d="M60 13C59 8 62 4 67 2c2 4 3 9-2 12zM71 13c1-2 3-3 5-3v5h-7z" fill="#fff" strokeWidth=".5" /><path d="M60 17l6-7" stroke="#1c1c1c" strokeWidth="1.200" />
          </svg>
          <DateTime>18:22<br />20-08-2025</DateTime>
        </Tray>
      </Taskbar>
    </Screen>
  );
}
